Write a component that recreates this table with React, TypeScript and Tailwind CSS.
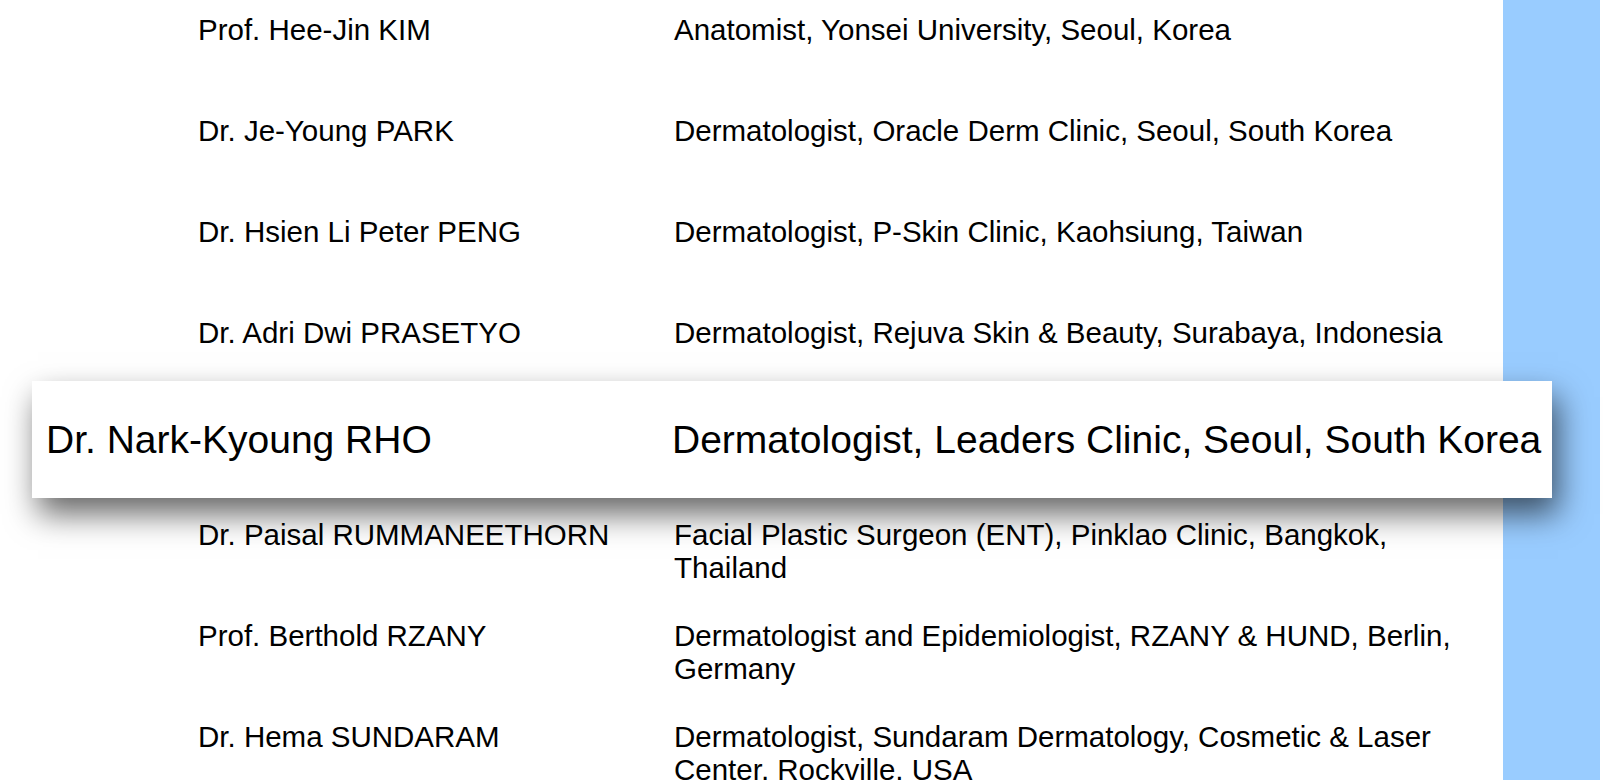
const rows = [
  { name: "Prof. Hee-Jin KIM", info: "Anatomist, Yonsei University, Seoul, Korea" },
  { name: "Dr. Je-Young PARK", info: "Dermatologist, Oracle Derm Clinic, Seoul, South Korea" },
  { name: "Dr. Hsien Li Peter PENG", info: "Dermatologist, P-Skin Clinic, Kaohsiung, Taiwan" },
  { name: "Dr. Adri Dwi PRASETYO", info: "Dermatologist, Rejuva Skin & Beauty, Surabaya, Indonesia" },
  { name: "Dr. Nark-Kyoung RHO", info: "Dermatologist, Leaders Clinic, Seoul, South Korea" },
  { name: "Dr. Paisal RUMMANEETHORN", info: "Facial Plastic Surgeon (ENT), Pinklao Clinic, Bangkok, Thailand" },
  { name: "Prof. Berthold RZANY", info: "Dermatologist and Epidemiologist, RZANY & HUND, Berlin, Germany" },
  { name: "Dr. Hema SUNDARAM", info: "Dermatologist, Sundaram Dermatology, Cosmetic & Laser Center, Rockville, USA" },
];

const highlighted = 4;

export default function App() {
  return (
    <div className="flex h-[780px] w-full overflow-hidden bg-white font-['Liberation_Sans',Arial,sans-serif] text-black">
      <div className="relative w-[1503px] shrink-0 pt-[13px]">
        {rows.map((r, i) => (
          <div
            key={r.name}
            className={
              i === highlighted
                ? "invisible flex h-[101px] pl-[198px] text-[29.5px] leading-[33px]"
                : "flex h-[101px] pl-[198px] text-[29.5px] leading-[33px]"
            }
          >
            <div className="w-[476px] shrink-0">{r.name}</div>
            <div className="w-[816px] shrink-0">{r.info}</div>
          </div>
        ))}

        {/* magnified row */}
        <div className="absolute left-[32px] top-[381px] flex h-[117px] w-[1520px] items-center bg-white pl-[14px] text-[39px] leading-[45px] shadow-[6px_16px_30px_rgba(0,0,0,0.6)]">
          <div className="w-[626px] shrink-0">{rows[highlighted].name}</div>
          <div className="whitespace-nowrap">{rows[highlighted].info}</div>
        </div>
      </div>
      <div className="w-[97px] shrink-0 bg-[#99ccff]" />
      <div className="flex-1 bg-white" />
    </div>
  );
}
